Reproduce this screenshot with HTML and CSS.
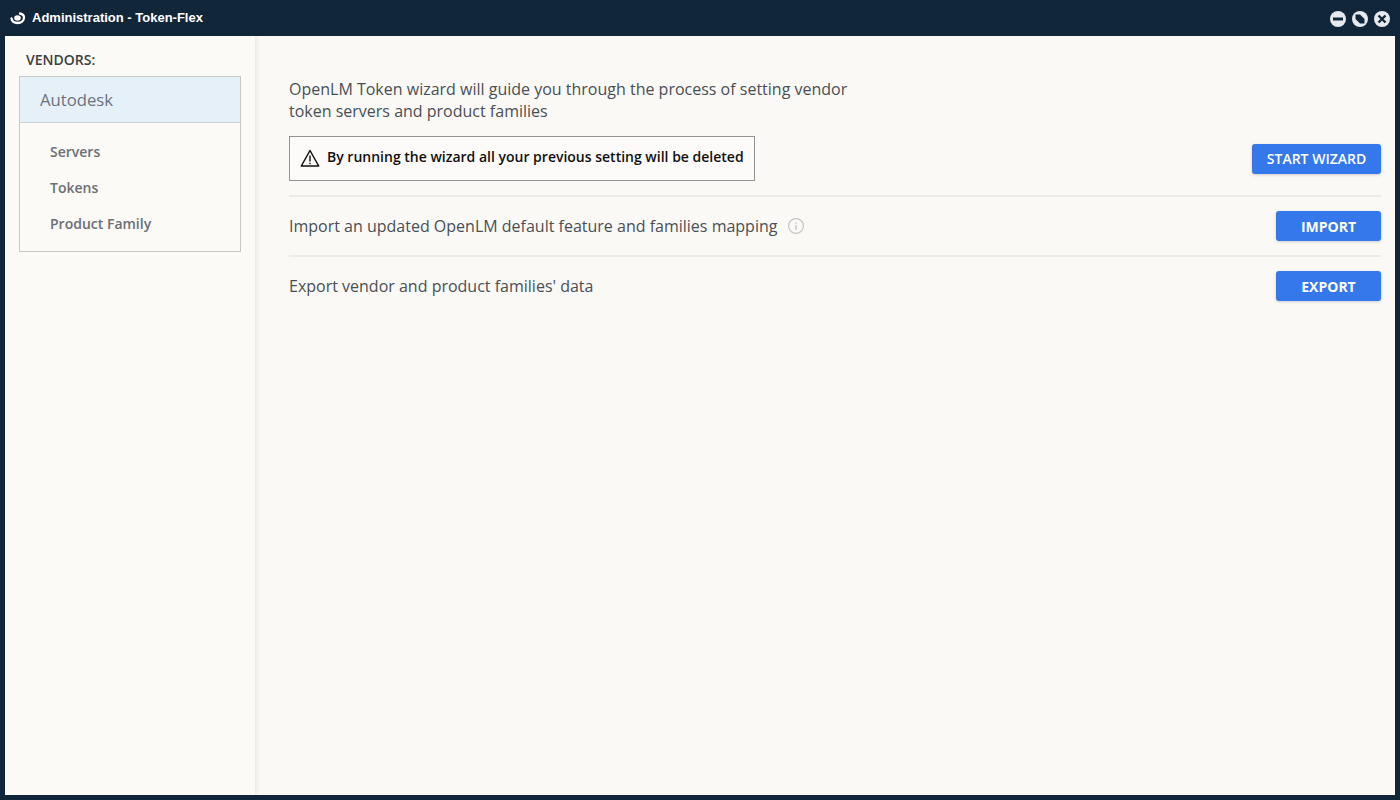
FILE: index.html
```html
<!DOCTYPE html>
<html lang="en">
<head>
<meta charset="utf-8">
<title>Administration - Token-Flex</title>
<link rel="stylesheet" href="styles.css">
</head>
<body>
<div class="window">
  <header class="titlebar">
    <div class="title-left">
      <svg class="logo" width="16" height="13" viewBox="0 0 16 13"><path d="M1.500 6.500C2 9.500 4.500 11 7.500 11 11.500 11 14 8.500 14 5.500 14 3.500 12.500 2 10 1.500" fill="none" stroke="#fff" stroke-width="2.300" stroke-linecap="round"/><ellipse cx="7.500" cy="6" rx="3.300" ry="2.800" fill="#fff"/></svg>
      <span class="title-text">Administration - Token-Flex</span>
    </div>
    <div class="controls">
      <svg class="ctl" width="16" height="16" viewBox="0 0 16 16"><circle cx="8" cy="8" r="8" fill="#e6eaee"/><rect x="3" y="6.500" width="10" height="3" fill="#12263a"/></svg>
      <svg class="ctl" width="16" height="16" viewBox="0 0 16 16"><circle cx="8" cy="8" r="8" fill="#e6eaee"/><path d="M3.500 3.500H8L12.500 8V12.500H8L3.500 8Z" fill="#12263a"/></svg>
      <svg class="ctl" width="16" height="16" viewBox="0 0 16 16"><circle cx="8" cy="8" r="8" fill="#e6eaee"/><path d="M4.500 4.500L11.500 11.500M11.500 4.500L4.500 11.500" stroke="#12263a" stroke-width="2.400"/></svg>
    </div>
  </header>
  <div class="body">
    <aside class="sidebar">
      <div class="vendors-label">VENDORS:</div>
      <div class="vendor-box">
        <div class="vendor-head">Autodesk</div>
        <ul class="vendor-items">
          <li>Servers</li>
          <li>Tokens</li>
          <li>Product Family</li>
        </ul>
      </div>
    </aside>
    <main class="content">
      <section class="row row-wizard">
        <div class="wizard-text">
          <p class="lead">OpenLM Token wizard will guide you through the process of setting vendor<br>token servers and product families</p>
          <div class="warning">
            <svg width="20" height="18" viewBox="0 0 20 18"><path d="M10 1.500L18.700 17H1.300Z" fill="none" stroke="#111" stroke-width="1.500" stroke-linejoin="round"/><rect x="9.300" y="6.500" width="1.400" height="6" fill="#111"/><rect x="9.300" y="13.700" width="1.400" height="1.500" fill="#111"/></svg>
            <span>By running the wizard all your previous setting will be deleted</span>
          </div>
        </div>
        <button class="btn btn-wizard">START WIZARD</button>
      </section>
      <section class="row row-simple">
        <div class="row-label">Import an updated OpenLM default feature and families mapping
          <svg class="info" width="16" height="16" viewBox="0 0 16 16"><circle cx="8" cy="8" r="7.400" fill="none" stroke="#c4c6c8" stroke-width="1.200"/><rect x="7.300" y="7" width="1.400" height="5" fill="#c4c6c8"/><rect x="7.300" y="4.300" width="1.400" height="1.500" fill="#c4c6c8"/></svg>
        </div>
        <button class="btn">IMPORT</button>
      </section>
      <section class="row row-simple row-last">
        <div class="row-label">Export vendor and product families' data</div>
        <button class="btn">EXPORT</button>
      </section>
    </main>
  </div>
</div>
</body>
</html>
```
FILE: styles.css
```css
* { box-sizing: border-box; }
html, body { margin: 0; height: 100%; overflow: hidden; }
body { font-family: "Open Sans", "Noto Sans", sans-serif; background: #12263a; }
.window { width: 1400px; height: 800px; display: flex; flex-direction: column; background: #12263a; padding: 0 5px 5px; }
.titlebar { height: 36px; flex: none; display: flex; justify-content: space-between; align-items: center; margin-left: 5px; margin-right: 5px; }
.title-left { display: flex; align-items: center; gap: 6px; }
.logo { display: block; margin-top: 1px; }
.title-text { font-family: "Liberation Sans", Arial, sans-serif; font-weight: 700; font-size: 13px; line-height: 15px; color: #fff; margin-bottom: 2px; }
.controls { display: flex; gap: 6px; margin-top: 1px; }
.ctl { display: block; }
.body { flex: 1; display: flex; background: #faf9f5; min-height: 0; }
.sidebar { width: 250px; flex: none; padding: 14px 14px 0; box-shadow: 2px 0 4px rgba(0, 0, 0, .07); background: #fbfaf6; }
.vendors-label { font-size: 14px; line-height: 19px; color: #3f3f3f; padding-left: 7px; margin-bottom: 7px; font-weight: 600; }
.vendor-box { border: 1px solid #c8c8c8; width: 222px; }
.vendor-head { height: 46px; line-height: 46px; background: #e6f0f9; border-bottom: 1px solid #c8d0d8; padding-left: 20px; font-size: 16.700px; color: #6a737c; }
.vendor-items { list-style: none; margin: 0; padding: 11px 0 9px; }
.vendor-items li { height: 36px; line-height: 36px; padding-left: 30px; font-size: 14px; font-weight: 600; color: #6c6f75; }
.content { flex: 1; padding: 42px 14px 0 34px; min-width: 0; }
.row { display: flex; justify-content: space-between; }
.row-wizard { align-items: flex-end; padding-bottom: 14px; border-bottom: 2px solid #ecebe9; }
.lead { margin: 0 0 14px; font-size: 16px; line-height: 22px; color: #4a4f55; }
.warning { width: 466px; height: 45px; border: 1px solid #939393; background: #fcfbf9; display: flex; align-items: center; gap: 7px; padding: 0 0 5px 10px; font-size: 14px; font-weight: 600; color: #111; }
.warning svg { display: block; margin-top: 4px; }
.row-simple { align-items: center; height: 60px; border-bottom: 2px solid #ecebe9; }
.row-last { border-bottom-color: transparent; }
.row-label { font-size: 16px; color: #4a4f55; display: flex; align-items: center; gap: 11px; }
.btn { width: 105px; height: 30px; border: 0; border-radius: 3px; background: #3478ec; color: #fff; font-family: "Open Sans", sans-serif; font-size: 14px; font-weight: 700; padding: 0; box-shadow: 0 1px 3px rgba(0, 0, 0, .18); flex: none; }
.btn-wizard { width: 129px; margin-bottom: 7px; padding-bottom: 2px; font-weight: 600; }
```
